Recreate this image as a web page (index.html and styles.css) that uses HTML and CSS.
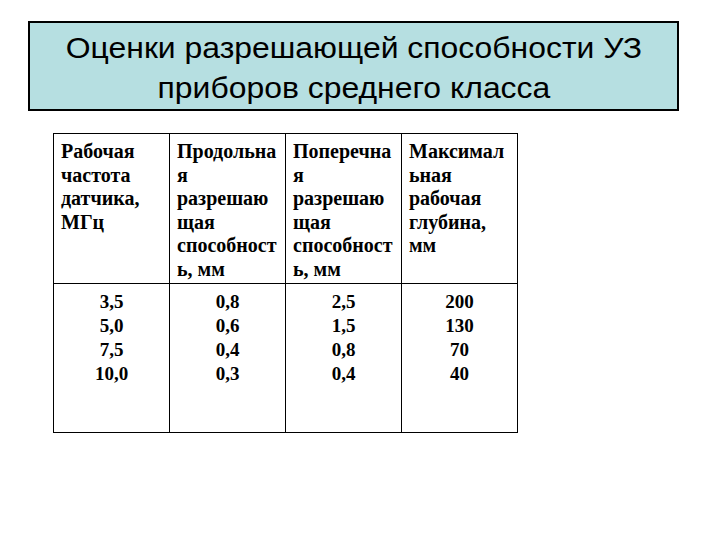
FILE: index.html
```html
<!DOCTYPE html>
<html lang="ru">
<head>
<meta charset="utf-8">
<link rel="stylesheet" href="styles.css">
</head>
<body>
<div class="page">
  <div class="title"><span class="title-text">Оценки разрешающей способности УЗ<br>приборов среднего класса</span></div>
  <table class="data">
    <tr class="head">
      <td>Рабочая<br>частота<br>датчика,<br>МГц</td>
      <td>Продольна<br>я<br>разрешаю<br>щая<br>способност<br>ь, мм</td>
      <td>Поперечна<br>я<br>разрешаю<br>щая<br>способност<br>ь, мм</td>
      <td>Максимал<br>ьная<br>рабочая<br>глубина,<br>мм</td>
    </tr>
    <tr class="vals">
      <td>3,5<br>5,0<br>7,5<br>10,0</td>
      <td>0,8<br>0,6<br>0,4<br>0,3</td>
      <td>2,5<br>1,5<br>0,8<br>0,4</td>
      <td>200<br>130<br>70<br>40</td>
    </tr>
  </table>
</div>
</body>
</html>
```
FILE: styles.css
```css
html, body {
  margin: 0;
  padding: 0;
  background: #ffffff;
}
.page {
  width: 720px;
  height: 540px;
  padding: 21px 0 0 28px;
  box-sizing: border-box;
}
.title {
  width: 651px;
  height: 90px;
  box-sizing: border-box;
  border: 2px solid #000;
  background: #b6dfe1;
  font-family: "Liberation Sans", Arial, sans-serif;
  font-size: 29px;
  line-height: 40px;
  text-align: center;
  color: #000;
  padding-top: 5px;
}
.title-text {
  display: inline-block;
  transform: scaleX(1.1);
}
.data {
  margin: 22px 0 0 25px;
  border-collapse: collapse;
  font-family: "Liberation Serif", "Times New Roman", serif;
  font-weight: bold;
  color: #000;
}
.data td {
  border: 1px solid #000;
  width: 116px;
  box-sizing: border-box;
  vertical-align: top;
  white-space: nowrap;
  padding: 0;
}
.head td {
  height: 150px;
  font-size: 20px;
  line-height: 23.6px;
  padding: 6px 0 0 7px;
  text-align: left;
}
.vals td {
  height: 149px;
  font-size: 19px;
  line-height: 24px;
  padding-top: 6px;
  text-align: center;
}
```
